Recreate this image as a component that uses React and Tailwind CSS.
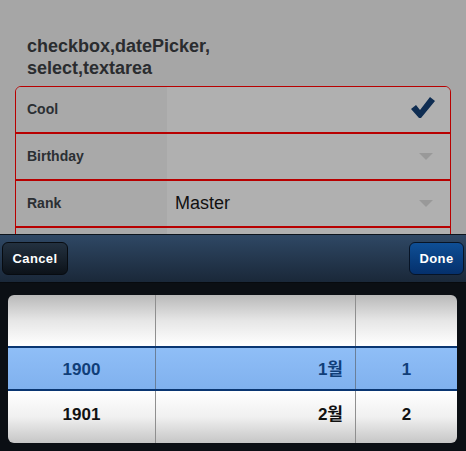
import React from "react";

function Check() {
  return (
    <svg width="24" height="22" viewBox="0 0 24 22" className="block">
      <polygon points="0,12 5,8 9,13 19,0 24,4 10,21 8,21" fill="#0f2d52" />
    </svg>
  );
}

function Tri() {
  return (
    <svg width="14" height="7" viewBox="0 0 14 7" className="block">
      <polygon points="0,0 14,0 7,7" fill="#999999" />
    </svg>
  );
}

function Row({ label, children, right, last }) {
  return (
    <div className={`flex ${last ? "h-[45px]" : "h-[47px] border-b-2 border-[#b80000]"}`}>
      <div className="w-[151px] shrink-0 bg-[#a9a9a9] flex items-center pl-[11px] text-[14px] font-bold text-[#2b2f33]">
        {label}
      </div>
      <div className="flex-1 bg-[#b0b0b0] flex items-center pl-[8px] pr-[17px]">
        <div className="flex-1 text-[18px] text-[#111]">{children}</div>
        {right}
      </div>
    </div>
  );
}

export default function App() {
  const font = { fontFamily: '"Liberation Sans", "Noto Sans CJK KR", Arial, sans-serif' };
  return (
    <div className="relative w-[466px] h-[451px] overflow-hidden bg-[#a6a6a6]" style={font}>
      <div className="pt-[35px] px-[15px]">
        <h1 className="pl-[12px] text-[18px] leading-[22px] font-bold text-[#2a2c2f]">
          checkbox,datePicker,
          <br />
          select,textarea
        </h1>
        <div className="mt-[7px] border border-[#b80000] rounded-t-[6px] overflow-hidden">
          <Row label="Cool" right={<div className="-mt-[4px] mr-[-2px]"><Check /></div>} />
          <Row label="Birthday" right={<Tri />} />
          <Row label="Rank" right={<Tri />}>Master</Row>
          <Row label="" last />
        </div>
      </div>

      <div className="absolute left-0 right-0 bottom-0 h-[217px] flex flex-col">
        <div className="h-[49px] border-t border-[#0d141c] border-b border-b-[#070a0e] bg-gradient-to-b from-[#2f4865] to-[#1a2839] flex items-center justify-between px-[2px]">
          <button className="h-[33px] w-[66px] rounded-[6px] border border-[#070b10] bg-gradient-to-b from-[#233140] via-[#18222d] to-[#0c1219] text-white font-bold text-[13px] tracking-[0.4px]">
            Cancel
          </button>
          <button className="h-[33px] w-[55px] rounded-[6px] border border-[#071426] bg-gradient-to-b from-[#0f4f96] to-[#05306c] text-white font-bold text-[13px] tracking-[0.4px]">
            Done
          </button>
        </div>
        <div className="flex-1 bg-[#0b0f14] px-[8px] pt-[12px] pb-[8px]">
          <div className="relative h-[148px] w-[449px] rounded-[6px] overflow-hidden flex flex-col">
            <div className="h-[51px] bg-gradient-to-b from-[#b9b9b9] via-[#e6e6e6] to-white flex">
              <div className="w-[148px] border-r border-[#8f8f8f]" />
              <div className="w-[200px] border-r border-[#8f8f8f]" />
              <div className="flex-1" />
            </div>
            <div className="h-[45px] border-y-2 border-[#0a3672] bg-gradient-to-b from-[#8fbef7] to-[#80b1ee] flex text-[17px] font-bold text-[#103e78]">
              <div className="w-[148px] border-r border-[#6a7f99] flex items-center justify-center pt-[2px]">1900</div>
              <div className="w-[200px] border-r border-[#6a7f99] flex items-center justify-end pr-[12px] pt-[2px]">1월</div>
              <div className="flex-1 flex items-center justify-center pt-[2px]">1</div>
            </div>
            <div className="flex-1 bg-gradient-to-b from-white via-[#f0f0f0] to-[#c6c6c6] flex text-[17px] font-bold text-[#111]">
              <div className="w-[148px] border-r border-[#8f8f8f] flex items-start pt-[11px] justify-center">1901</div>
              <div className="w-[200px] border-r border-[#8f8f8f] flex items-start pt-[11px] justify-end pr-[12px]">2월</div>
              <div className="flex-1 flex items-start pt-[11px] justify-center">2</div>
            </div>
          </div>
        </div>
      </div>
    </div>
  );
}
